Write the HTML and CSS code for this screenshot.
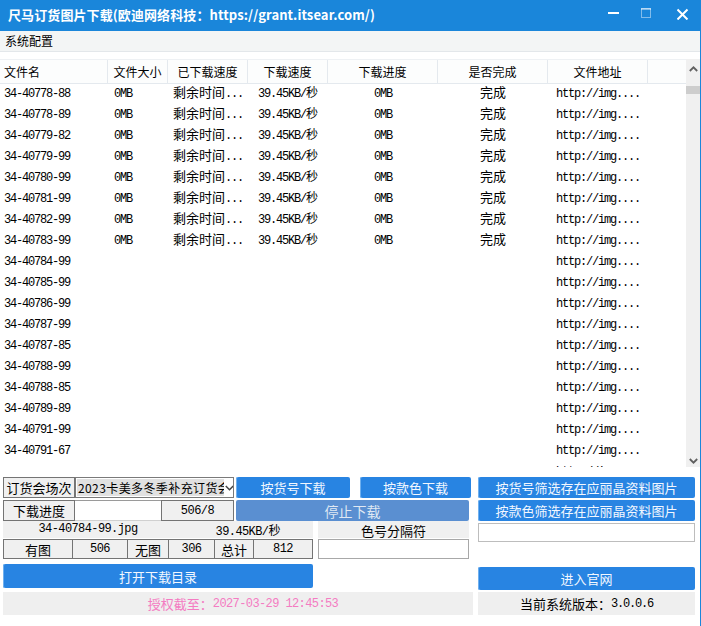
FILE: index.html
```html
<!DOCTYPE html>
<html lang="zh-CN">

<head>
    <meta charset="UTF-8">
    <title>尺马订货图片下载</title>
    <link rel="stylesheet" href="styles.css">
</head>

<body>
    <div class="window">
        <div class="titlebar">
            <div class="title">尺马订货图片下载(欧迪网络科技：https://grant.itsear.com/)</div>
            <div class="win-controls">
                <div class="win-btn min">
                    <svg width="12" height="12" viewBox="0 0 12 12"><rect x="0" y="4" width="11" height="2" fill="#fff"/></svg>
                </div>
                <div class="win-btn max">
                    <svg width="12" height="12" viewBox="0 0 12 12"><rect x="0.5" y="0.5" width="9" height="9" fill="none" stroke="rgba(255,255,255,0.45)"/><rect x="0" y="0" width="10" height="2" fill="rgba(255,255,255,0.45)"/></svg>
                </div>
                <div class="win-btn close">
                    <svg width="12" height="12" viewBox="0 0 12 12"><path d="M0.5 1.5 L10.5 11.5 M10.5 1.5 L0.5 11.5" stroke="#fff" stroke-width="2"/></svg>
                </div>
            </div>
        </div>

        <div class="menubar"><span>系统配置</span></div>

        <div class="list">
            <div class="table">
                <div class="thead">
                    <div class="th first">文件名</div>
                    <div class="th">文件大小</div>
                    <div class="th">已下载速度</div>
                    <div class="th">下载速度</div>
                    <div class="th">下载进度</div>
                    <div class="th">是否完成</div>
                    <div class="th">文件地址</div>
                    <div class="th last"></div>
                </div>
                <div class="tbody">
                    <div class="row"><span class="td name">34-40778-88</span><span class="td size">0MB</span><span class="td"><b>剩余时间</b>...</span><span class="td">39.45KB/<b class="sm">秒</b></span><span class="td">0MB</span><span class="td"><b>完成</b></span><span class="td">http://img....</span></div>
                    <div class="row"><span class="td name">34-40778-89</span><span class="td size">0MB</span><span class="td"><b>剩余时间</b>...</span><span class="td">39.45KB/<b class="sm">秒</b></span><span class="td">0MB</span><span class="td"><b>完成</b></span><span class="td">http://img....</span></div>
                    <div class="row"><span class="td name">34-40779-82</span><span class="td size">0MB</span><span class="td"><b>剩余时间</b>...</span><span class="td">39.45KB/<b class="sm">秒</b></span><span class="td">0MB</span><span class="td"><b>完成</b></span><span class="td">http://img....</span></div>
                    <div class="row"><span class="td name">34-40779-99</span><span class="td size">0MB</span><span class="td"><b>剩余时间</b>...</span><span class="td">39.45KB/<b class="sm">秒</b></span><span class="td">0MB</span><span class="td"><b>完成</b></span><span class="td">http://img....</span></div>
                    <div class="row"><span class="td name">34-40780-99</span><span class="td size">0MB</span><span class="td"><b>剩余时间</b>...</span><span class="td">39.45KB/<b class="sm">秒</b></span><span class="td">0MB</span><span class="td"><b>完成</b></span><span class="td">http://img....</span></div>
                    <div class="row"><span class="td name">34-40781-99</span><span class="td size">0MB</span><span class="td"><b>剩余时间</b>...</span><span class="td">39.45KB/<b class="sm">秒</b></span><span class="td">0MB</span><span class="td"><b>完成</b></span><span class="td">http://img....</span></div>
                    <div class="row"><span class="td name">34-40782-99</span><span class="td size">0MB</span><span class="td"><b>剩余时间</b>...</span><span class="td">39.45KB/<b class="sm">秒</b></span><span class="td">0MB</span><span class="td"><b>完成</b></span><span class="td">http://img....</span></div>
                    <div class="row"><span class="td name">34-40783-99</span><span class="td size">0MB</span><span class="td"><b>剩余时间</b>...</span><span class="td">39.45KB/<b class="sm">秒</b></span><span class="td">0MB</span><span class="td"><b>完成</b></span><span class="td">http://img....</span></div>
                    <div class="row"><span class="td name">34-40784-99</span><span class="td"></span><span class="td"></span><span class="td"></span><span class="td"></span><span class="td"></span><span class="td">http://img....</span></div>
                    <div class="row"><span class="td name">34-40785-99</span><span class="td"></span><span class="td"></span><span class="td"></span><span class="td"></span><span class="td"></span><span class="td">http://img....</span></div>
                    <div class="row"><span class="td name">34-40786-99</span><span class="td"></span><span class="td"></span><span class="td"></span><span class="td"></span><span class="td"></span><span class="td">http://img....</span></div>
                    <div class="row"><span class="td name">34-40787-99</span><span class="td"></span><span class="td"></span><span class="td"></span><span class="td"></span><span class="td"></span><span class="td">http://img....</span></div>
                    <div class="row"><span class="td name">34-40787-85</span><span class="td"></span><span class="td"></span><span class="td"></span><span class="td"></span><span class="td"></span><span class="td">http://img....</span></div>
                    <div class="row"><span class="td name">34-40788-99</span><span class="td"></span><span class="td"></span><span class="td"></span><span class="td"></span><span class="td"></span><span class="td">http://img....</span></div>
                    <div class="row"><span class="td name">34-40788-85</span><span class="td"></span><span class="td"></span><span class="td"></span><span class="td"></span><span class="td"></span><span class="td">http://img....</span></div>
                    <div class="row"><span class="td name">34-40789-89</span><span class="td"></span><span class="td"></span><span class="td"></span><span class="td"></span><span class="td"></span><span class="td">http://img....</span></div>
                    <div class="row"><span class="td name">34-40791-99</span><span class="td"></span><span class="td"></span><span class="td"></span><span class="td"></span><span class="td"></span><span class="td">http://img....</span></div>
                    <div class="row"><span class="td name">34-40791-67</span><span class="td"></span><span class="td"></span><span class="td"></span><span class="td"></span><span class="td"></span><span class="td">http://img....</span></div>
                    <div class="row"><span class="td name"></span><span class="td"></span><span class="td"></span><span class="td"></span><span class="td"></span><span class="td"></span><span class="td">http://img....</span></div>
                </div>
            </div>
            <div class="scrollbar">
                <div class="arrow up">
                    <svg width="9" height="6" viewBox="0 0 9 6"><path d="M0.8 5 L4.5 1.3 L8.2 5" fill="none" stroke="#606060" stroke-width="1.8"/></svg>
                </div>
                <div class="thumb"></div>
                <div class="track"></div>
                <div class="arrow down">
                    <svg width="9" height="6" viewBox="0 0 9 6"><path d="M0.8 1 L4.5 4.7 L8.2 1" fill="none" stroke="#606060" stroke-width="1.8"/></svg>
                </div>
            </div>
        </div>

        <div class="panel">
            <div class="left">
                <div class="line r1">
                    <div class="box label">订货会场次</div>
                    <div class="select">
                        <span class="select-text">2023卡美多冬季补充订货会</span>
                        <svg class="chev" width="9" height="6" viewBox="0 0 9 6"><path d="M0.8 1 L4.5 4.7 L8.2 1" fill="none" stroke="#444" stroke-width="1.5"/></svg>
                    </div>
                    <button class="btn by-no">按货号下载</button>
                    <button class="btn by-color">按款色下载</button>
                </div>
                <div class="line r2">
                    <div class="box label">下载进度</div>
                    <div class="field"></div>
                    <div class="box count">506/8</div>
                    <button class="btn stop">停止下载</button>
                </div>
                <div class="line r3">
                    <div class="strip file mono">34-40784-99.jpg</div>
                    <div class="strip speed mono">39.45KB/<b>秒</b></div>
                    <div class="strip sep">色号分隔符</div>
                </div>
                <div class="line r4">
                    <div class="stats">
                        <div class="box w70">有图</div>
                        <div class="box w56 num">506</div>
                        <div class="box w42">无图</div>
                        <div class="box w47 num">306</div>
                        <div class="box w40">总计</div>
                        <div class="box w60 num">812</div>
                    </div>
                    <div class="input sep-input"></div>
                </div>
                <div class="line r5">
                    <button class="btn open">打开下载目录</button>
                </div>
                <div class="line r6">
                    <div class="bar license">授权截至：<span class="mono">2027-03-29 12:45:53</span></div>
                </div>
            </div>

            <div class="right">
                <button class="btn wide">按货号筛选存在应丽晶资料图片</button>
                <button class="btn wide second">按款色筛选存在应丽晶资料图片</button>
                <div class="input filter"></div>
                <button class="btn wide site">进入官网</button>
                <div class="bar version">当前系统版本：<span class="mono">3.0.0.6</span></div>
            </div>
        </div>
    </div>
</body>

</html>
```

FILE: styles.css
```css
* {
    margin: 0;
    padding: 0;
    box-sizing: border-box;
}

body {
    font-family: "Noto Sans CJK SC", "Noto Sans", sans-serif;
    font-size: 12px;
    color: #000;
    background: #fff;
}

.window {
    width: 701px;
    height: 626px;
    border-right: 1px solid #1a86da;
    overflow: hidden;
}

/* title bar */
.titlebar {
    height: 31px;
    background: #1a86da;
    display: flex;
    color: #fff;
}

.title {
    flex: 1;
    padding-left: 8px;
    font-size: 13px;
    font-weight: bold;
    letter-spacing: 0.1px;
    line-height: 30px;
    white-space: nowrap;
}

.win-controls {
    display: flex;
}

.win-btn {
    display: flex;
    justify-content: center;
    padding-top: 8px;
}

.win-btn.min {
    width: 34px;
    padding-left: 1px;
}

.win-btn.max {
    width: 32px;
    padding-left: 2px;
}

.win-btn.close {
    width: 38px;
    padding-left: 4px;
}

/* menu */
.menubar {
    height: 21px;
    background: #f3f5f5;
    border-bottom: 1px solid #e3e7ea;
    padding-left: 5px;
    line-height: 20px;
}

/* file list */
.list {
    margin-top: 7px;
    height: 408px;
    display: flex;
}

.table {
    flex: 1;
    overflow: hidden;
}

.thead,
.row {
    display: grid;
    grid-template-columns: 108px 60px 80px 80px 110px 110px 100px 1fr;
}

.thead {
    height: 25px;
    background: #fcfdfd;
    border-top: 1px solid #eef1f4;
    border-bottom: 1px solid #e4e9ee;
}

.th {
    border-right: 1px solid #e4e9ee;
    text-align: center;
    line-height: 23px;
}

.th.first {
    text-align: left;
    padding-left: 4px;
}

.th.last {
    border-right: none;
}

.row {
    height: 21px;
}

/* every cell shares the mono strut so the baselines line up */
.td {
    text-align: center;
    font-family: "Liberation Mono", monospace;
    font-size: 12px;
    letter-spacing: -1.2px;
    line-height: 20px;
    white-space: nowrap;
}

.td b {
    font-family: "Noto Sans CJK SC", sans-serif;
    font-weight: normal;
    font-size: 13px;
    letter-spacing: 0;
    line-height: 0;
}

.td b.sm {
    font-size: 12px;
}

.td.name {
    text-align: left;
    padding-left: 4px;
}

.td.size {
    text-align: left;
    padding-left: 6px;
}

.scrollbar {
    width: 14px;
    background: #f0f0f0;
    display: flex;
    flex-direction: column;
}

.arrow {
    height: 20px;
    display: flex;
    justify-content: center;
    align-items: center;
}

.arrow.up {
    height: 27px;
    align-items: flex-start;
    padding-top: 7px;
}

.thumb {
    height: 8px;
    background: #cdcdcd;
}

.track {
    flex: 1;
}

.arrow.down {
    align-items: flex-start;
    padding-top: 3px;
    height: 12px;
}

/* bottom controls */
.panel {
    margin-top: 10px;
    padding-left: 3px;
    display: flex;
}

.left {
    width: 470px;
}

.right {
    width: 217px;
    margin-left: 5px;
    display: flex;
    flex-direction: column;
}

.line {
    display: flex;
}

.box {
    background: #f0f0f0;
    border: 1px solid #747474;
    display: flex;
    align-items: center;
    justify-content: center;
    font-size: 13px;
}

.box.num {
    font-family: "Liberation Mono", monospace;
    font-size: 12px;
    letter-spacing: -0.5px;
}

.r1 {
    height: 21px;
}

.label {
    width: 72px;
}

.select {
    width: 159px;
    border: 1px solid #7a7a7a;
    background: #fff;
    display: flex;
    align-items: center;
    padding-left: 1px;
    overflow: hidden;
}

.select-text {
    width: 147px;
    flex-shrink: 0;
    background: #e1e1e1;
    line-height: 17px;
    font-size: 12px;
    letter-spacing: 0.4px;
    white-space: nowrap;
    overflow: hidden;
    padding-left: 1px;
}

.chev {
    margin-left: 1px;
    flex-shrink: 0;
}

.btn {
    border: none;
    border-radius: 2px;
    background: #2884e2;
    color: #f2f7ff;
    font-family: "Noto Sans CJK SC", sans-serif;
    font-size: 13px;
    box-shadow: inset 1px 0 0 #6fb0ef;
}

.btn.by-no {
    width: 114px;
    margin-left: 2px;
}

.btn.by-color {
    width: 111px;
    margin-left: 10px;
}

.r2 {
    height: 21px;
    margin-top: 2px;
}

.field {
    width: 86px;
    background: #fff;
    border-top: 1px solid #9a9a9a;
    border-bottom: 1px solid #d0d0d0;
}

.count {
    width: 73px;
    font-family: "Liberation Mono", monospace;
    font-size: 12px;
    letter-spacing: -0.5px;
}

.btn.stop {
    width: 233px;
    margin-left: 2px;
    background: #5a8fd1;
    color: #dfe8f3;
    box-shadow: none;
    font-size: 14px;
}

.r3 {
    height: 17px;
}

.strip {
    background: #f0f0f0;
    text-align: center;
    line-height: 17px;
}

.mono {
    font-family: "Liberation Mono", monospace;
    font-size: 12px;
    letter-spacing: -1.2px;
}

.mono b {
    font-family: "Noto Sans CJK SC", sans-serif;
    font-weight: normal;
    letter-spacing: 0;
}

.strip.file {
    width: 170px;
    letter-spacing: -0.6px;
}

.strip.speed {
    width: 140px;
    padding-left: 10px;
    letter-spacing: -0.6px;
}

.strip.sep {
    width: 151px;
    margin-left: 5px;
    font-size: 13px;
    padding-top: 1px;
}

.r4 {
    height: 20px;
    margin-top: 1px;
}

.stats {
    display: flex;
    width: 310px;
}

.stats .box + .box {
    margin-left: -1px;
}

.w70 { width: 70px; }
.w56 { width: 56px; }
.w42 { width: 42px; }
.w47 { width: 47px; }
.w40 { width: 40px; }
.w60 { width: 60px; }

.input {
    background: #fff;
    border: 1px solid #a8a8a8;
}

.sep-input {
    width: 151px;
    margin-left: 5px;
}

.r5 {
    height: 24px;
    margin-top: 5px;
}

.btn.open {
    width: 310px;
}

.r6 {
    height: 23px;
    margin-top: 4px;
}

.bar {
    background: #efefef;
    display: flex;
    align-items: center;
    justify-content: center;
    font-size: 13px;
}

.license {
    width: 470px;
    color: #f47cc2;
    padding-left: 10px;
}

.license .mono {
    letter-spacing: -0.6px;
}

.btn.wide {
    height: 21px;
}

.btn.second {
    margin-top: 2px;
}

.input.filter {
    height: 19px;
    margin-top: 2px;
    border-color: #bdbdbd;
}

.btn.site {
    height: 23px;
    margin-top: 25px;
}

.version {
    height: 23px;
    margin-top: 2px;
    font-size: 13px;
}
```
